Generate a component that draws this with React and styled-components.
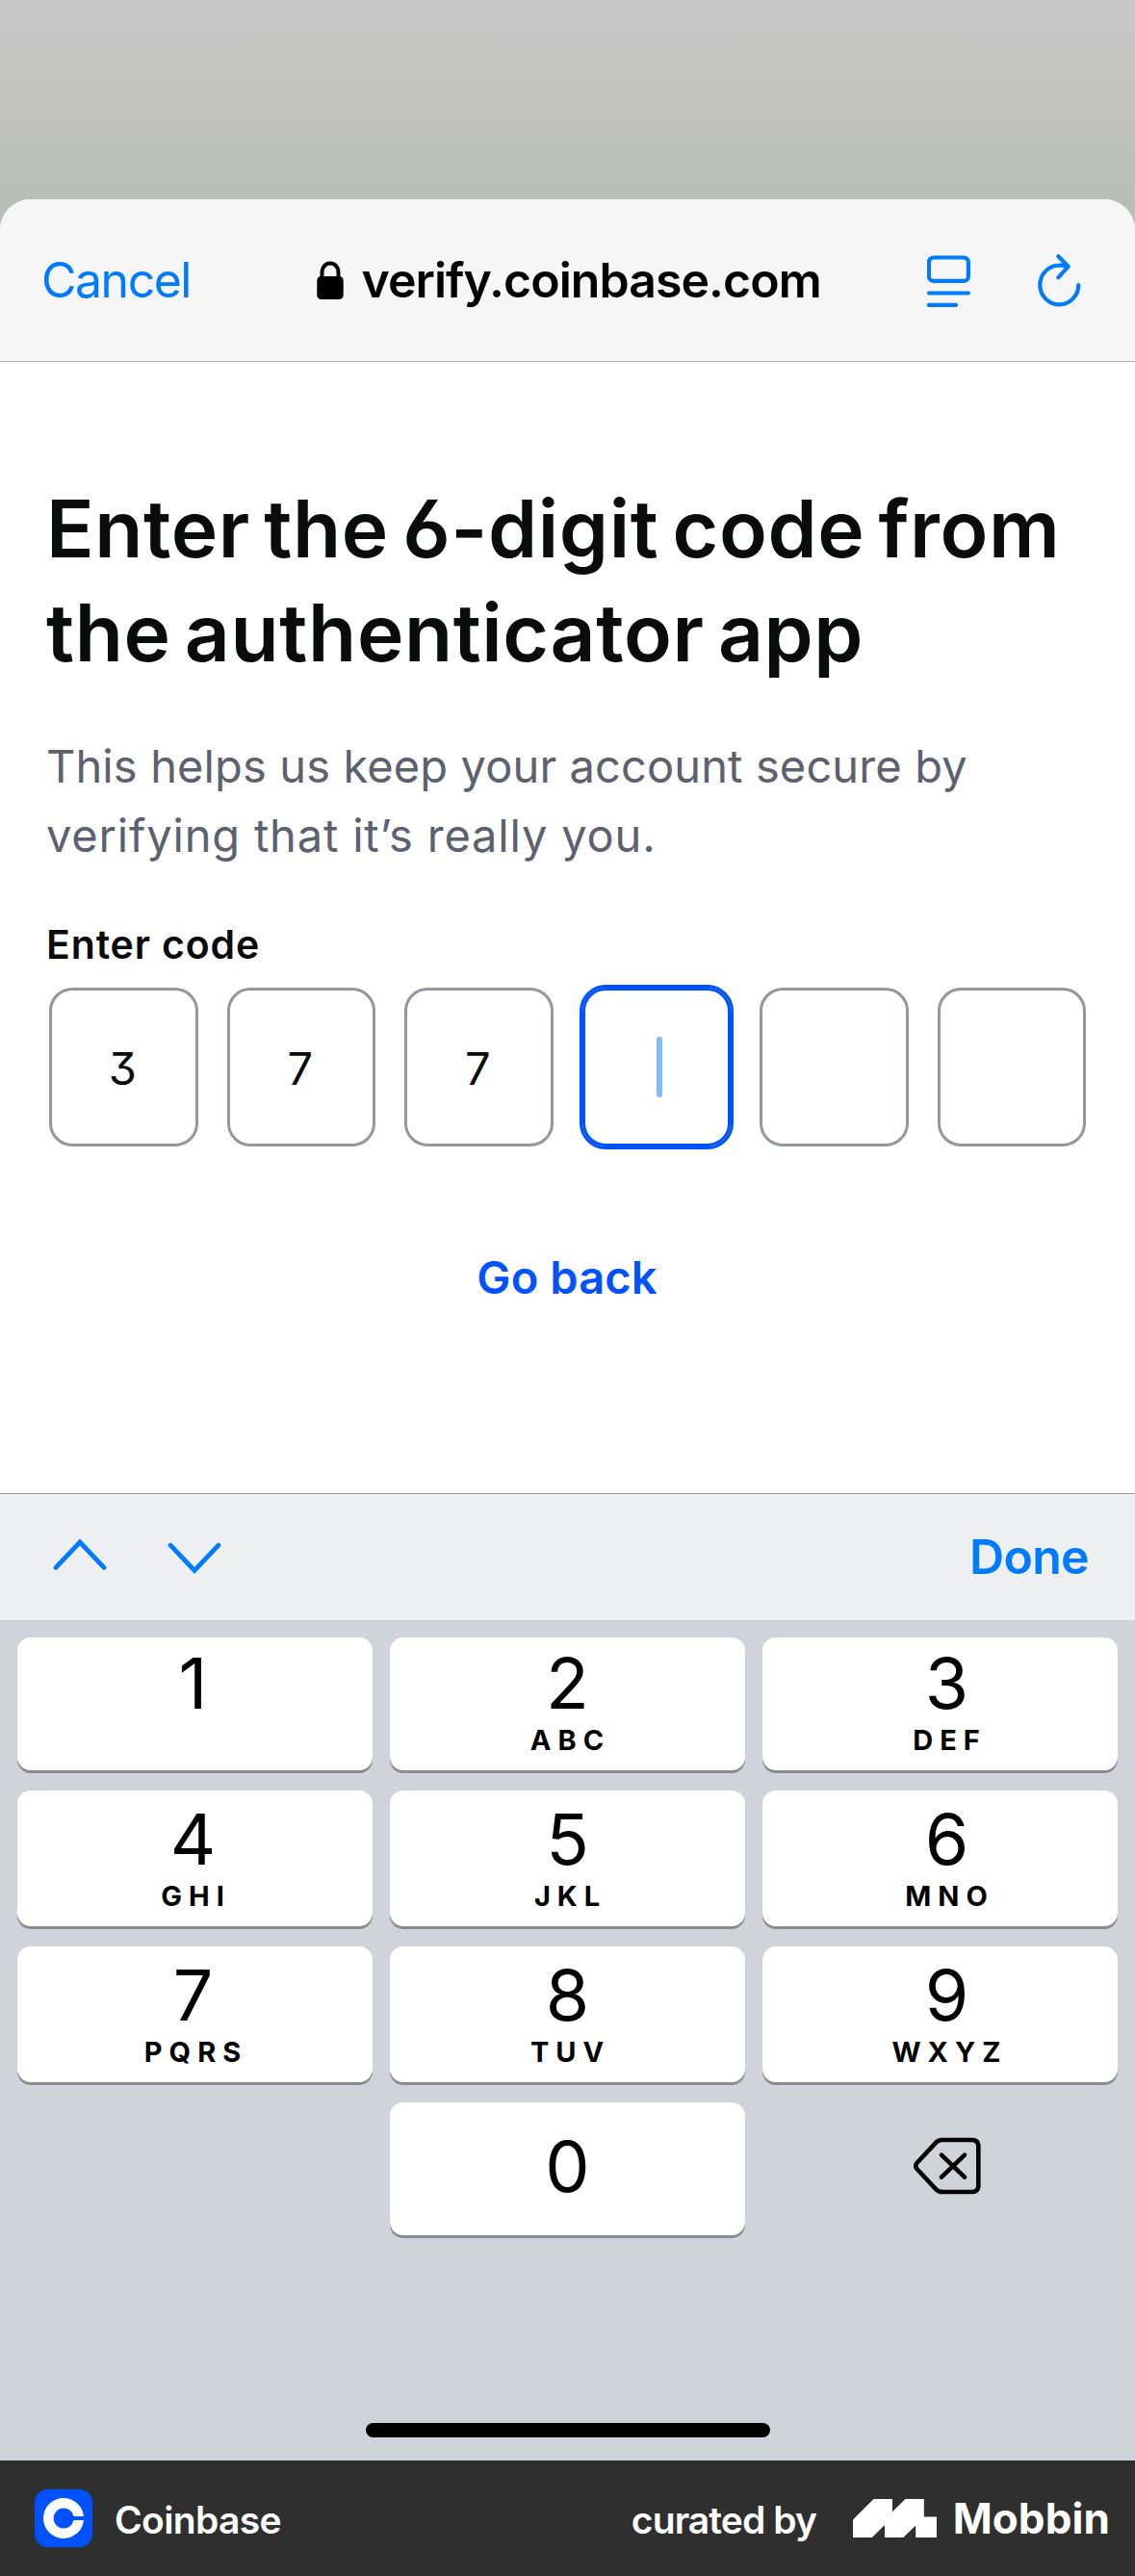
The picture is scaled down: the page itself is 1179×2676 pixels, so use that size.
import React from 'react';
import styled, { createGlobalStyle } from 'styled-components';

const GlobalStyle = createGlobalStyle`
  * { box-sizing: border-box; }
  body {
    margin: 0;
    font-family: Inter, "Liberation Sans", sans-serif;
    -webkit-font-smoothing: antialiased;
  }
  svg { display: block; flex: none; }
`;

const IOS_BLUE = '#007aff';
const BRAND_BLUE = '#0052ff';

const Screen = styled.main`
  width: 1179px;
  height: 2676px;
  display: flex;
  flex-direction: column;
  background: linear-gradient(#c8c8c8 0, #bbbdb9 200px, #bbbdb9 260px);
  padding-top: 207px;
  overflow: hidden;
`;

/* Browser sheet */

const Sheet = styled.section`
  flex: 1;
  display: flex;
  flex-direction: column;
  background: #fff;
  border-radius: 32px 32px 0 0;
  overflow: hidden;
`;

const BrowserBar = styled.header`
  height: 169px;
  display: flex;
  align-items: center;
  padding: 0 56px 0 43px;
  background: #f6f6f6;
  border-bottom: 1px solid #b0b0b0;
`;

const TextButton = styled.button`
  border: 0;
  padding: 0;
  background: none;
  font-family: inherit;
  font-size: ${(p) => p.$size}px;
  font-weight: ${(p) => p.$weight};
  line-height: 60px;
  letter-spacing: ${(p) => p.$track}px;
  color: ${(p) => p.$color};
`;

const CancelSlot = styled.div`
  flex: 0 0 286px;
`;

const Address = styled.div`
  display: flex;
  align-items: center;
  gap: 18.5px;
  font-size: 50px;
  font-weight: 600;
  line-height: 60px;
  letter-spacing: -0.95px;
  color: #000;
`;

const BarActions = styled.div`
  margin-left: auto;
  display: flex;
  align-items: center;
  gap: 69px;
`;

/* Verification form */

const Form = styled.div`
  flex: 1;
  padding: 120px 48px 0;
`;

const Title = styled.h1`
  margin: 0;
  font-size: 82px;
  font-weight: 640;
  line-height: 108px;
  letter-spacing: 0.6px;
  word-spacing: -7px;
  font-feature-settings: "cv03", "cv04", "cv09";
  white-space: nowrap;
  color: #0a0b0d;
`;

const Description = styled.p`
  margin: 48px 0 0;
  font-size: 47px;
  line-height: 72px;
  white-space: nowrap;
  color: #5b616e;
`;

const Line = styled.span`
  display: block;
  letter-spacing: ${(p) => p.$track}px;
`;

const Label = styled.div`
  margin-top: 53px;
  font-size: 41px;
  font-weight: 600;
  line-height: 48px;
  letter-spacing: 0.86px;
  color: #0a0b0d;
`;

const CodeRow = styled.div`
  margin: 21px 0 0 3px;
  width: 1077px;
  display: flex;
  justify-content: space-between;
`;

const CodeCell = styled.div`
  width: 154.5px;
  height: 165px;
  display: flex;
  align-items: center;
  justify-content: center;
  border: 3px solid ${(p) => (p.$active ? BRAND_BLUE : '#95979f')};
  box-shadow: ${(p) => (p.$active ? `0 0 0 3px ${BRAND_BLUE}` : 'none')};
  border-radius: 24px;
  font-size: 47px;
  line-height: 60px;
  font-feature-settings: "cv09";
  padding: 2px 2px 0 0;
  color: #0a0b0d;
`;

const Caret = styled.span`
  width: 6px;
  height: 63px;
  margin-left: 9px;
  margin-top: -3px;
  border-radius: 3px;
  background: #80bcff;
`;

const FormFooter = styled.div`
  margin-top: 106px;
  padding-right: 1px;
  display: flex;
  justify-content: center;
`;

/* Keyboard */

const Accessory = styled.div`
  height: 132px;
  display: flex;
  align-items: center;
  gap: 59px;
  padding: 0 48px 1px 53px;
  background: #edeff1;
  border-top: 1px solid #96989a;
`;

const DoneSlot = styled.div`
  margin-left: auto;
  padding-bottom: 1px;
`;

const Keyboard = styled.section`
  height: 873px;
  display: flex;
  flex-direction: column;
  align-items: center;
  justify-content: space-between;
  padding: 18px 18px 24px;
  background: #d0d3da;
`;

const KeyGrid = styled.div`
  display: grid;
  grid-template-columns: repeat(3, 369px);
  grid-template-rows: 138px 141px 141px 138px;
  gap: 21px 18px;
`;

const KEY_INSETS = { 1: [4, 0], 2: [0, 0], 3: [0, 14] };

const Key = styled.button`
  grid-column: ${(p) => p.$column};
  display: flex;
  flex-direction: column;
  align-items: center;
  justify-content: ${(p) => (p.$plain ? 'center' : 'flex-end')};
  border: 0;
  padding: 0 ${(p) => KEY_INSETS[p.$column][0]}px
    ${(p) => (p.$ghost ? 6 : p.$plain ? 4 : 16.5)}px
    ${(p) => KEY_INSETS[p.$column][1]}px;
  border-radius: 14px;
  background: ${(p) => (p.$ghost ? 'none' : '#fff')};
  box-shadow: ${(p) => (p.$ghost ? 'none' : '0 3px 0 #898b8e')};
  font-family: inherit;
  color: #000;
`;

const Digit = styled.span`
  font-size: 73.5px;
  font-weight: 400;
  line-height: 80px;
`;

const Letters = styled.span`
  height: 30px;
  margin-top: 4px;
  padding-left: 6px;
  font-size: 29px;
  font-weight: 650;
  line-height: 30px;
  letter-spacing: 7px;
`;

const HomeIndicator = styled.div`
  width: 420px;
  height: 15px;
  border-radius: 8px;
  background: #000;
`;

/* Attribution strip */

const Attribution = styled.footer`
  height: 120px;
  display: flex;
  align-items: center;
  padding: 0 26px 0 36px;
  background: #2f2f2f;
  color: #fff;
`;

const AppName = styled.span`
  margin-left: 23px;
  padding-top: 3px;
  font-size: 39px;
  font-weight: 580;
  line-height: 48px;
  letter-spacing: -0.65px;
`;

const CuratedBy = styled.span`
  margin-left: auto;
  margin-right: 37.5px;
  padding-top: 3px;
  font-size: 39px;
  font-weight: 580;
  line-height: 48px;
  letter-spacing: -0.9px;
`;

const Wordmark = styled.span`
  margin-left: 17px;
  font-size: 44px;
  font-weight: 700;
  line-height: 52px;
  letter-spacing: 0.1px;
`;

const LockIcon = () => (
  <svg width="28" height="40" viewBox="0 0 28 40">
    <path d="M5.5 18V11.5a8.5 9 0 0 1 17 0V18" fill="none" stroke="#000" strokeWidth="4" />
    <rect x="0.3" y="16" width="27.4" height="24" rx="4.5" fill="#000" />
  </svg>
);

const ReaderIcon = () => (
  <svg width="46" height="56" viewBox="0.5 -1.5 46 56" fill="none" stroke={IOS_BLUE} strokeWidth="4.2">
    <rect x="2.4" y="3" width="41" height="24.4" rx="5" />
    <path d="M2.5 40H43.5M2.5 52.4H30.5" strokeLinecap="round" />
  </svg>
);

const ReloadIcon = () => (
  <svg
    width="45"
    height="56"
    viewBox="0 0 45 56"
    fill="none"
    stroke={IOS_BLUE}
    strokeWidth="4.2"
    strokeLinecap="round"
    strokeLinejoin="round"
  >
    <path d="M42.3 33A20 20.3 0 1 1 22.3 12.7Q27 12.4 31 13.5" />
    <path d="M21.3 3.3L31.6 13.8L21.3 25.3" />
  </svg>
);

const ChevronIcon = ({ down }) => (
  <svg
    width="60"
    height="40"
    viewBox="0 0 60 40"
    fill="none"
    stroke={IOS_BLUE}
    strokeWidth="4.8"
    strokeLinecap="round"
    strokeLinejoin="miter"
  >
    <path d={down ? 'M5 8.2L30 34.5L55 8.2' : 'M5 31.4L30 5L55 31.4'} />
  </svg>
);

const DeleteIcon = () => (
  <svg
    width="70"
    height="60"
    viewBox="0 0 70 60"
    fill="none"
    stroke="#000"
    strokeWidth="4.6"
    strokeLinecap="round"
    strokeLinejoin="round"
  >
    <path d="M29.5 3H60.5Q67.3 3 67.3 9.8V50.2Q67.3 57 60.5 57H29.5Q26 57 23.6 54.6L3.6 33.2Q0.8 30 3.6 26.8L23.6 5.4Q26 3 29.5 3Z" />
    <path d="M29 18.7L53 41.6M53 18.7L29 41.6" />
  </svg>
);

const CoinbaseIcon = () => (
  <svg width="60" height="60" viewBox="0 0 60 60">
    <rect width="60" height="60" rx="13.5" fill={BRAND_BLUE} />
    <path
      d="M40.4 28A10.5 10.5 0 1 0 40.4 32H50.9A21 21 0 1 1 50.9 28Z"
      fill="#fff"
    />
  </svg>
);

const MobbinIcon = () => (
  <svg width="87" height="40" viewBox="0 0 87 40">
    <path
      d="M0 21.5L21.5 0H41V13.3L54.5 0H73.8V18.6H87V40H65.2V27.4L52.4 40H33V27L19.8 40H0Z"
      fill="#fff"
    />
  </svg>
);

const CODE = ['3', '7', '7', null, '', ''];

const KEYS = [
  ['1', ''],
  ['2', 'ABC'],
  ['3', 'DEF'],
  ['4', 'GHI'],
  ['5', 'JKL'],
  ['6', 'MNO'],
  ['7', 'PQRS'],
  ['8', 'TUV'],
  ['9', 'WXYZ'],
];

export default function App() {
  return (
    <>
      <GlobalStyle />
      <Screen>
        <Sheet>
          <BrowserBar>
            <CancelSlot>
              <TextButton $size={50} $weight={400} $track={-1.5} $color={IOS_BLUE}>
                Cancel
              </TextButton>
            </CancelSlot>
            <Address>
              <LockIcon />
              verify.coinbase.com
            </Address>
            <BarActions>
              <ReaderIcon />
              <ReloadIcon />
            </BarActions>
          </BrowserBar>
          <Form>
            <Title>
              Enter the 6-digit code from
              <br />
              the authenticator app
            </Title>
            <Description>
              <Line $track={0.12}>This helps us keep your account secure by</Line>
              <Line $track={0.82}>verifying that it’s really you.</Line>
            </Description>
            <Label>Enter code</Label>
            <CodeRow>
              {CODE.map((value, i) => (
                <CodeCell key={i} $active={value === null}>
                  {value === null ? <Caret /> : value}
                </CodeCell>
              ))}
            </CodeRow>
            <FormFooter>
              <TextButton $size={47} $weight={620} $track={0.1} $color={BRAND_BLUE}>
                Go back
              </TextButton>
            </FormFooter>
          </Form>
        </Sheet>
        <Accessory>
          <ChevronIcon />
          <ChevronIcon down />
          <DoneSlot>
            <TextButton $size={50} $weight={600} $track={-0.7} $color={IOS_BLUE}>
              Done
            </TextButton>
          </DoneSlot>
        </Accessory>
        <Keyboard>
          <KeyGrid>
            {KEYS.map(([digit, letters], i) => (
              <Key key={digit} $column={(i % 3) + 1}>
                <Digit>{digit}</Digit>
                <Letters>{letters}</Letters>
              </Key>
            ))}
            <Key $column={2} $plain>
              <Digit>0</Digit>
            </Key>
            <Key $column={3} $plain $ghost>
              <DeleteIcon />
            </Key>
          </KeyGrid>
          <HomeIndicator />
        </Keyboard>
        <Attribution>
          <CoinbaseIcon />
          <AppName>Coinbase</AppName>
          <CuratedBy>curated by</CuratedBy>
          <MobbinIcon />
          <Wordmark>Mobbin</Wordmark>
        </Attribution>
      </Screen>
    </>
  );
}
